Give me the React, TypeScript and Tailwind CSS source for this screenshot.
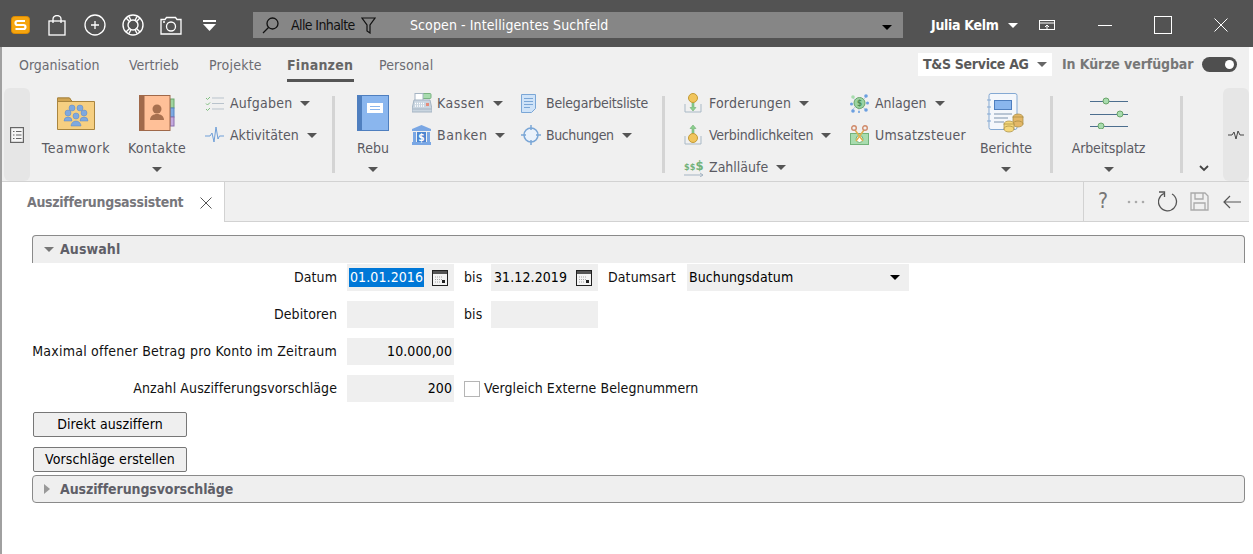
import type { ReactNode } from 'react';

const Caret = ({ className = 'border-t-[#555]' }: { className?: string }) => (
  <span className={`inline-block w-0 h-0 border-x-[5px] border-x-transparent border-t-[5px] ${className}`} />
);

const LogoIcon = () => (
  <svg width="19" height="18" viewBox="0 0 19 18">
    <rect x="0.5" y="0.5" width="18" height="17" rx="3" fill="#f5a50f" stroke="#e08c00" />
    <path d="M14 5H6.5a1.6 1.6 0 0 0 0 4h6a1.6 1.6 0 0 1 0 4H4.5" fill="none" stroke="#fff" strokeWidth="2.2" />
  </svg>
);

const ToolIcons = () => (
  <div className="flex items-center">
    <div className="ml-[11px]"><LogoIcon /></div>
    <svg className="ml-[18px]" width="18" height="21" viewBox="0 0 18 21" fill="none" stroke="#fff" strokeWidth="1.3">
      <rect x="1" y="6" width="16" height="14" />
      <path d="M5 8V4a4 3.5 0 0 1 8 0v4" />
    </svg>
    <svg className="ml-[18px]" width="22" height="22" viewBox="0 0 22 22" fill="none" stroke="#fff" strokeWidth="1.3">
      <circle cx="11" cy="11" r="10" />
      <path d="M11 7v8M7 11h8" />
    </svg>
    <svg className="ml-[16px]" width="22" height="22" viewBox="0 0 22 22" fill="none" stroke="#fff" strokeWidth="1.4">
      <circle cx="11" cy="11" r="10" />
      <circle cx="11" cy="11" r="5" />
      <path d="M4 4l4 4M18 4l-4 4M4 18l4-4M18 18l-4-4M7 2.5l2 4M15 2.5l-2 4M7 19.500l2-4M15 19.500l-2-4" />
    </svg>
    <svg className="ml-[16px]" width="22" height="19" viewBox="0 0 22 19" fill="none" stroke="#fff" strokeWidth="1.3">
      <path d="M1 3.500h4l1.500-2h9l1.500 2h4v14.500H1z" />
      <circle cx="11" cy="10.500" r="4.500" />
      <path d="M3 6h2" />
    </svg>
    <svg className="ml-[21px]" width="13" height="11" viewBox="0 0 13 11" fill="#fff">
      <rect x="0" y="0" width="13" height="2" />
      <path d="M0 4h13L6.500 11z" />
    </svg>
  </div>
);

const SearchBox = () => (
  <div className="ml-[37px] w-[650px] h-[26px] bg-[#868686] flex items-center text-[14px]">
    <svg className="ml-[9px]" width="17" height="17" viewBox="0 0 17 17" fill="none" stroke="#111" strokeWidth="1.3">
      <circle cx="10.500" cy="6.500" r="5.500" />
      <path d="M6.500 10.500L1 16" />
    </svg>
    <span className="ml-[12px] text-[#111] w-[70px] tracking-[-0.6px]">Alle Inhalte</span>
    <svg width="15" height="17" viewBox="0 0 15 17" fill="none" stroke="#111" strokeWidth="1.200">
      <path d="M1 1h13L9 8v8l-3-2V8z" />
    </svg>
    <span className="ml-[34px] text-white tracking-[0.1px]">Scopen - Intelligentes Suchfeld</span>
    <span className="ml-auto mr-[11px]"><Caret className="border-t-black" /></span>
  </div>
);

const WindowControls = () => (
  <div className="flex items-center">
    <span className="ml-[28px] text-white font-bold text-[14px] w-[77px] tracking-[-0.3px]">Julia Kelm</span>
    <Caret className="border-t-white" />
    <svg className="ml-[21px]" width="16" height="11" viewBox="0 0 16 11" fill="none" stroke="#fff">
      <rect x="0.500" y="0.500" width="15" height="9" />
      <path d="M0 3h16" />
      <path d="M8 10V5M6 7l2-2 2 2" />
    </svg>
    <span className="ml-[43px] w-[14px] h-px bg-white" />
    <span className="ml-[42px] w-[18px] h-[18px] border border-white" />
    <svg className="ml-[42px]" width="14" height="14" viewBox="0 0 14 14" stroke="#fff" strokeWidth="1">
      <path d="M0.500 0.500l13 13M13.500 0.500l-13 13" />
    </svg>
  </div>
);

const TopTabs = () => (
  <div className="h-[40px] flex items-start text-[14px] text-[#6b6b72]">
    <span className="ml-[17px] mt-[8px] w-[110px]">Organisation</span>
    <span className="mt-[8px] w-[80px]">Vertrieb</span>
    <span className="mt-[8px] w-[78px] tracking-[0.2px]">Projekte</span>
    <div className="mt-[8px] w-[92px] flex flex-col items-start">
      <span className="font-bold text-[#666] tracking-[0.25px]">Finanzen</span>
      <span className="mt-[3px] w-[67px] h-[3px] bg-[#555]" />
    </div>
    <span className="mt-[8px] tracking-[0.1px]">Personal</span>
    <div className="ml-auto mt-[6px] mr-[12px] flex items-center">
      <div className="w-[134px] h-[23px] bg-white flex items-center font-bold text-[#5a5a5a]">
        <span className="ml-[5px] w-[114px] tracking-[-0.3px]">T&amp;S Service AG</span>
        <Caret className="border-t-[#666]" />
      </div>
      <span className="ml-[10px] w-[140px] font-bold text-[#777] tracking-[-0.1px]">In Kürze verfügbar</span>
      <div className="w-[35px] h-[15px] rounded-full bg-[#4f4f4f] flex items-center justify-end pr-[3px]">
        <span className="w-[9px] h-[9px] rounded-full bg-white" />
      </div>
    </div>
  </div>
);

const TeamworkIcon = () => (
  <svg width="38" height="33" viewBox="0 0 38 33">
    <path d="M0.500 32.500V1h12l2.500 3.500h22.500v28z" fill="#f6cf81" stroke="#a9853f" />
    <path d="M0.500 1h12l2.500 3.500H0.500z" fill="#d2a552" stroke="#a9853f" />
    <g fill="#7fa9e0" stroke="#5b87c4" strokeWidth="0.500">
      <circle cx="15" cy="11" r="3" />
      <circle cx="23" cy="11" r="3" />
      <circle cx="11" cy="16" r="3" />
      <circle cx="27" cy="16" r="3" />
      <circle cx="19" cy="19" r="3" />
      <path d="M7 24a4 4 0 0 1 8 0zM23 24a4 4 0 0 1 8 0zM14 29a5 5 0 0 1 10 0z" />
    </g>
  </svg>
);

const KontakteIcon = () => (
  <svg width="36" height="36" viewBox="0 0 36 36">
    <rect x="31" y="4" width="4" height="9" fill="#9ed39e" stroke="#6aa56a" />
    <rect x="31" y="13" width="4" height="9" fill="#7da9e2" stroke="#5583c2" />
    <rect x="31" y="22" width="4" height="9" fill="#c4a9de" stroke="#8a6fae" />
    <rect x="0" y="0" width="5" height="36" fill="#a0694a" />
    <rect x="5" y="0.500" width="26" height="35" fill="#ffc098" stroke="#a0694a" />
    <circle cx="18" cy="14" r="4.500" fill="#a8704f" />
    <path d="M11 25c0-8 14-8 14 0z" fill="#a8704f" />
  </svg>
);

const RebuIcon = () => (
  <svg width="32" height="36" viewBox="0 0 32 36">
    <rect x="0.500" y="0.500" width="31" height="35" fill="#8ab6ee" stroke="#4f7fbf" />
    <rect x="0" y="0" width="5" height="36" fill="#4f7fbf" />
    <rect x="10" y="8" width="16" height="10" fill="#fff" />
    <path d="M13 11.500h10M13 14.500h10" stroke="#8ab6ee" />
  </svg>
);

const BerichteIcon = () => (
  <svg width="38" height="40" viewBox="0 0 38 40">
    <rect x="2" y="0.500" width="28" height="36" rx="2" fill="#f4f7fb" stroke="#84a9d3" />
    <path d="M0 7h4M0 14h4M0 21h4M0 28h4" stroke="#84a9d3" />
    <rect x="7.500" y="7.500" width="17" height="9" fill="#8ab6ee" stroke="#4f7fbf" />
    <path d="M7 21h18M7 25h14M7 29h10" stroke="#7d93ad" />
    <g stroke="#a58a3f" strokeWidth="0.700">
      <ellipse cx="31" cy="24" rx="5" ry="3" fill="#e3b768" />
      <rect x="26" y="24" width="10" height="7" fill="#e3b768" />
      <ellipse cx="31" cy="31" rx="5" ry="3" fill="#e3b768" />
      <ellipse cx="22" cy="31" rx="5" ry="3" fill="#f5d87c" />
      <rect x="17" y="31" width="10" height="5" fill="#f5d87c" />
      <ellipse cx="22" cy="36" rx="5" ry="3" fill="#f5d87c" />
    </g>
  </svg>
);

const ArbeitsplatzIcon = () => (
  <svg width="38" height="32" viewBox="0 0 38 32" stroke="#4c6e8e" fill="#a8dcae">
    <path d="M0 4.500h38M0 17.500h38M0 29.500h38" />
    <circle cx="16" cy="4" r="3" stroke="#6aa56a" />
    <circle cx="30" cy="17" r="3" stroke="#6aa56a" />
    <circle cx="11" cy="29" r="3" stroke="#6aa56a" />
  </svg>
);

const CoinArrow = ({ up }: { up?: boolean }) => (
  <svg width="18" height="20" viewBox="0 0 18 20">
    <path d="M1 11v8h16v-8" fill="none" stroke="#a9b9c6" />
    <path
      d={up ? 'M9 0l3 3.500h-2V9H8V3.500H6z' : 'M9 18l3-3.500h-2V9H8v5.500H6z'}
      fill="#8ccf8f"
      stroke="#62a565"
      strokeWidth="0.500"
    />
    <circle cx="9" cy={up ? 13 : 5} r="4.500" fill="#f1c55c" stroke="#c39b36" />
  </svg>
);

const smallIcons: Record<string, ReactNode> = {
  Aufgaben: (
    <svg width="19" height="15" viewBox="0 0 19 15" fill="none">
      <path d="M7 2h12M7 7.500h12M7 13h12" stroke="#b9c3cc" />
      <path d="M1 2l1.500 1.500L5 1M1 7.500L2.500 9 5 6.500M1 13l1.500 1.500L5 12" stroke="#7fbf7f" />
    </svg>
  ),
  Aktivitäten: (
    <svg width="19" height="18" viewBox="0 0 19 18" fill="none" stroke="#6f9fd8">
      <path d="M0 10h5l2-3 2 9 2-15 2 12 1.500-3H19" />
    </svg>
  ),
  Kassen: (
    <svg width="20" height="20" viewBox="0 0 20 20">
      <rect x="9" y="0.500" width="10" height="5" rx="1" fill="#a8dcae" stroke="#7ab382" />
      <rect x="3" y="0.500" width="8" height="7" fill="#fff" stroke="#a5b4c3" />
      <path d="M2 7h16l2 9v3H0v-3z" fill="#c9d5e0" stroke="#a5b4c3" />
      <path d="M3 10.500h9M3 13h9" stroke="#fff" strokeWidth="1.500" strokeDasharray="1 1" />
      <rect x="14" y="10" width="3" height="3" fill="#e58b7a" />
      <path d="M0 16h20" stroke="#a5b4c3" />
    </svg>
  ),
  Banken: (
    <svg width="19" height="20" viewBox="0 0 19 20" fill="#7aa7e4">
      <path d="M9.500 0L19 4v2H0V4z" />
      <rect x="1" y="7" width="3" height="10" />
      <rect x="15" y="7" width="3" height="10" />
      <rect x="5" y="7" width="9" height="10" fill="#4d86d1" />
      <rect x="0" y="17" width="19" height="3" />
      <text x="9.500" y="16" fontSize="10" fontWeight="700" textAnchor="middle" fill="#fff">$</text>
    </svg>
  ),
  Belegarbeitsliste: (
    <svg width="15" height="19" viewBox="0 0 15 19" fill="#cfe3f8" stroke="#7aa6d6">
      <path d="M0.500 0.500h14v14l-4 4h-10z" />
      <path d="M3 4.500h9M3 7.500h9M3 10.500h9M3 13.500h6" />
    </svg>
  ),
  Buchungen: (
    <svg width="20" height="20" viewBox="0 0 20 20" fill="none" stroke="#7aa6d6">
      <circle cx="10" cy="10" r="7" fill="#eaf2fb" strokeWidth="1.500" />
      <path d="M10 0v5M10 15v5M0 10h5M15 10h5" strokeWidth="1.500" />
    </svg>
  ),
  Forderungen: <CoinArrow />,
  Verbindlichkeiten: <CoinArrow up />,
  Zahlläufe: (
    <svg width="20" height="19" viewBox="0 0 20 19">
      <text x="0" y="12" fontSize="9" fontWeight="700" fill="#72b27a">$$</text>
      <text x="11.500" y="12" fontSize="13" fontWeight="700" fill="#72b27a">$</text>
      <path d="M0 17h19M16 15l3 2-3 2" fill="none" stroke="#a5b4c3" />
    </svg>
  ),
  Anlagen: (
    <svg width="19" height="19" viewBox="0 0 19 19" fill="#6b9fe0">
      <path d="M2 3l14 13M16 3L2 16M9 9v9" stroke="#b8cbe0" />
      <circle cx="3" cy="3" r="1.800" fill="#a8dcae" />
      <circle cx="16" cy="2" r="1.800" />
      <circle cx="1.500" cy="10" r="1.500" />
      <circle cx="17.500" cy="9" r="1.500" />
      <circle cx="3" cy="17" r="1.800" />
      <circle cx="16" cy="16" r="1.800" />
      <circle cx="9" cy="18" r="1" />
      <circle cx="9.500" cy="9" r="5.500" fill="#9ad3a2" stroke="#6aa56a" />
      <text x="9.500" y="12" fontSize="8" fontWeight="700" textAnchor="middle" fill="#4f8f58">$</text>
    </svg>
  ),
  Umsatzsteuer: (
    <svg width="19" height="20" viewBox="0 0 19 20">
      <rect x="0.500" y="8.500" width="18" height="11" fill="#a8dcae" stroke="#72b27a" />
      <circle cx="9.500" cy="14" r="3.500" fill="#fff" stroke="#72b27a" />
      <path d="M5 5l8 11M14 5L6 16" stroke="#e0b04f" strokeWidth="1.500" />
      <circle cx="4" cy="3" r="2.300" fill="none" stroke="#d08a6a" strokeWidth="1.400" />
      <circle cx="15" cy="3" r="2.300" fill="none" stroke="#d08a6a" strokeWidth="1.400" />
    </svg>
  ),
};

const SmallItem = ({ name, track = '', arrow = true }: { name: string; track?: string; arrow?: boolean }) => (
  <div className="h-[32px] flex items-center">
    <span className="w-[25px] flex justify-start">{smallIcons[name]}</span>
    <span className={track}>{name}</span>
    {arrow && <span className="ml-[8px] flex"><Caret /></span>}
  </div>
);

const BigItem = ({ icon, label, className, track = '', arrow = true }: { icon: ReactNode; label: string; className: string; track?: string; arrow?: boolean }) => (
  <div className={`shrink-0 flex flex-col items-center ${className}`}>
    <div className="h-[38px] mt-[7px] flex items-center">{icon}</div>
    <span className={`mt-[6px] ${track}`}>{label}</span>
    {arrow && <span className="mt-[8px] flex"><Caret /></span>}
  </div>
);

const Sep = ({ className = '' }: { className?: string }) => (
  <span className={`w-[3px] h-[77px] mt-[9px] bg-[#d4d4d4] shrink-0 ${className}`} />
);

const Ribbon = () => (
  <div className="h-[95px] border-b border-[#d2d2d2] flex items-start text-[14px] text-[#5a5a62]">
    <div className="ml-[2px] w-[26px] h-[93px] mt-px shrink-0 bg-[#e6e6e6] rounded-[6px] flex items-center justify-center">
      <svg width="14" height="16" viewBox="0 0 14 16" fill="#f5f5f5" stroke="#666" strokeWidth="1.200">
        <rect x="0.600" y="0.600" width="12.800" height="14.800" />
        <path d="M3 4.500h1.500M6 4.500h5.500M3 8h1.500M6 8h5.500M3 11.500h1.500M6 11.500h5.500" />
      </svg>
    </div>
    <BigItem icon={<TeamworkIcon />} label="Teamwork" className="w-[92px]" track="tracking-[0.6px]" arrow={false} />
    <BigItem icon={<KontakteIcon />} label="Kontakte" className="w-[70px]" track="tracking-[0.25px]" />
    <div className="ml-[13px] w-[127px] shrink-0">
      <SmallItem name="Aufgaben" track="tracking-[0.25px]" />
      <SmallItem name="Aktivitäten" />
    </div>
    <Sep />
    <BigItem icon={<RebuIcon />} label="Rebu" className="w-[76px]" />
    <div className="ml-px w-[109px] shrink-0">
      <SmallItem name="Kassen" track="tracking-[0.5px]" />
      <SmallItem name="Banken" track="tracking-[0.6px]" />
    </div>
    <div className="w-[141px] shrink-0">
      <SmallItem name="Belegarbeitsliste" track="tracking-[-0.2px]" arrow={false} />
      <SmallItem name="Buchungen" track="tracking-[-0.4px]" />
    </div>
    <Sep />
    <div className="ml-[19px] w-[166px] shrink-0">
      <SmallItem name="Forderungen" track="tracking-[0.2px]" />
      <SmallItem name="Verbindlichkeiten" track="tracking-[-0.25px]" />
      <SmallItem name="Zahlläufe" />
    </div>
    <div className="w-[125px] shrink-0">
      <SmallItem name="Anlagen" />
      <SmallItem name="Umsatzsteuer" track="tracking-[0.3px]" arrow={false} />
    </div>
    <BigItem icon={<BerichteIcon />} label="Berichte" className="w-[62px]" track="tracking-[-0.1px]" />
    <Sep className="ml-[13px]" />
    <BigItem icon={<ArbeitsplatzIcon />} label="Arbeitsplatz" className="w-[111px]" track="tracking-[-0.15px]" />
    <Sep className="ml-[16px]" />
    <svg className="ml-[15px] mt-[78px] shrink-0" width="12" height="7" viewBox="0 0 12 7" fill="none" stroke="#444" strokeWidth="1.800">
      <path d="M2 1l4 4 4-4" />
    </svg>
    <div className="ml-[13px] w-[26px] h-[93px] mt-px shrink-0 bg-[#e6e6e6] rounded-[6px] flex items-center justify-center">
      <svg width="16" height="10" viewBox="0 0 16 10" fill="none" stroke="#444">
        <path d="M0 5h4l2-3 2 7 2-8 2 4h4" />
      </svg>
    </div>
  </div>
);

const DocTabs = () => (
  <div className="h-[40px] flex items-stretch">
    <div className="w-[223px] pt-px border-r border-[#d2d2d2] flex items-center">
      <span className="ml-[25px] w-[173px] font-bold text-[14px] text-[#77777c] tracking-[-0.3px]">Auszifferungsassistent</span>
      <svg width="12" height="12" viewBox="0 0 12 12" stroke="#555">
        <path d="M0.500 0.500l11 11M11.500 0.500l-11 11" />
      </svg>
    </div>
    <div className="flex-1 mr-[4px] bg-[#f0f0f0] border-b border-[#d2d2d2] flex items-center">
      <span className="ml-auto w-px h-[39px] bg-[#d2d2d2]" />
      <span className="ml-[11px] w-[16px] text-center text-[21px] leading-none text-[#777]">?</span>
      <svg className="ml-[16px]" width="18" height="4" viewBox="0 0 18 4" fill="#aaa">
        <circle cx="2" cy="2" r="1.300" />
        <circle cx="9" cy="2" r="1.300" />
        <circle cx="16" cy="2" r="1.300" />
      </svg>
      <svg className="ml-[13px]" width="20" height="21" viewBox="0 0 20 21" fill="none" stroke="#555" strokeWidth="1.300">
        <path d="M6 2.500A9 9 0 1 0 14 3" />
        <path d="M1 1h5.500v5" />
      </svg>
      <svg className="ml-[12px]" width="19" height="19" viewBox="0 0 19 19" fill="none" stroke="#aaa" strokeWidth="1.300">
        <path d="M1 1h14l3 3v14H1z" />
        <path d="M5 1v6h8V1M4 18v-7h11v7" />
      </svg>
      <svg className="ml-[14px] mr-[8px]" width="18" height="14" viewBox="0 0 18 14" fill="none" stroke="#555" strokeWidth="1.200">
        <path d="M18 7H1M7 1L1 7l6 6" />
      </svg>
    </div>
  </div>
);

const CalendarIcon = () => (
  <svg className="shrink-0" width="16" height="16" viewBox="0 0 16 16">
    <rect x="0.500" y="0.500" width="15" height="15" fill="#f4f4f4" stroke="#222" />
    <rect x="1" y="1" width="14" height="3" fill="#555" />
    <path d="M3 7h7M3 9.500h7M3 12h5" stroke="#aaa" strokeDasharray="1 1" />
    <rect x="10" y="10" width="3" height="3" fill="#222" />
  </svg>
);

const Field = ({ children, className = 'w-[107px]' }: { children?: ReactNode; className?: string }) => (
  <div className={`h-[27px] bg-[#efefef] flex items-center text-black ${className}`}>{children}</div>
);

const Row = ({ label, track = '', children }: { label: string; track?: string; children: ReactNode }) => (
  <div className="h-[27px] flex items-center">
    <span className={`w-[305px] text-right ${track}`}>{label}</span>
    <div className="ml-[10px] flex items-center">{children}</div>
  </div>
);

const Bis = () => <span className="w-[37px] pl-[10px]">bis</span>;

const ActionButton = ({ label }: { label: string }) => (
  <button className="ml-px w-[154px] h-[25px] bg-[#efefef] border border-[#777] rounded-[2px] text-[14px] text-black">
    {label}
  </button>
);

const Form = () => (
  <div className="pl-[30px] pr-[8px] pt-[13px] text-[14px] text-[#111] tracking-[0.1px]">
    <div className="h-[28px] bg-[#efefef] border-t border-x border-[#8a8a8a] rounded-t-[4px] flex items-center font-bold text-[#5f5f68]">
      <span className="ml-[11px] w-[16px] flex"><Caret className="border-t-[#777]" /></span>
      <span>Auswahl</span>
    </div>
    <div className="pt-px flex flex-col gap-[10px]">
      <Row label="Datum">
        <Field>
          <span className="ml-[2px] px-px h-[19px] w-[75px] bg-[#0078d7] text-white leading-[19px]">01.01.2016</span>
          <span className="ml-[8px] flex"><CalendarIcon /></span>
        </Field>
        <Bis />
        <Field>
          <span className="ml-[2px] w-[75px] px-px">31.12.2019</span>
          <span className="ml-[8px] flex"><CalendarIcon /></span>
        </Field>
        <span className="ml-[10px] w-[79px]">Datumsart</span>
        <Field className="w-[222px]">
          <span className="ml-[2px]">Buchungsdatum</span>
          <span className="ml-auto mr-[9px] flex"><Caret className="border-t-black" /></span>
        </Field>
      </Row>
      <Row label="Debitoren">
        <Field />
        <Bis />
        <Field />
      </Row>
      <Row label="Maximal offener Betrag pro Konto im Zeitraum" track="tracking-[0.23px]">
        <Field className="w-[107px] justify-end pr-[2px]">10.000,00</Field>
      </Row>
      <Row label="Anzahl Auszifferungsvorschläge">
        <Field className="w-[107px] justify-end pr-[2px]">200</Field>
        <span className="ml-[10px] w-[16px] h-[16px] border border-[#b5b5b5] bg-white" />
        <span className="ml-[4px]">Vergleich Externe Belegnummern</span>
      </Row>
    </div>
    <div className="mt-[10px] flex flex-col gap-[10px]">
      <ActionButton label="Direkt ausziffern" />
      <ActionButton label="Vorschläge erstellen" />
    </div>
    <div className="mt-[3px] h-[28px] bg-[#efefef] border border-[#8a8a8a] rounded-[4px] flex items-center font-bold text-[#5f5f68]">
      <span className="ml-[11px] w-[16px] flex">
        <span className="w-0 h-0 border-y-[5px] border-y-transparent border-l-[6px] border-l-[#999]" />
      </span>
      <span className="tracking-[-0.1px]">Auszifferungsvorschläge</span>
    </div>
  </div>
);

export default function App() {
  return (
    <div className="w-[1253px] h-[554px] overflow-hidden bg-white font-['DejaVu_Sans',sans-serif] font-stretch-condensed">
      <div className="h-[47px] pt-[3px] bg-[#535353] flex items-center">
        <ToolIcons />
        <SearchBox />
        <WindowControls />
      </div>
      <div className="h-[507px] border-l-2 border-[#a0a0a0]">
        <div className="bg-[#f0f0f0] mr-[4px]">
          <TopTabs />
          <Ribbon />
        </div>
        <DocTabs />
        <Form />
      </div>
    </div>
  );
}
